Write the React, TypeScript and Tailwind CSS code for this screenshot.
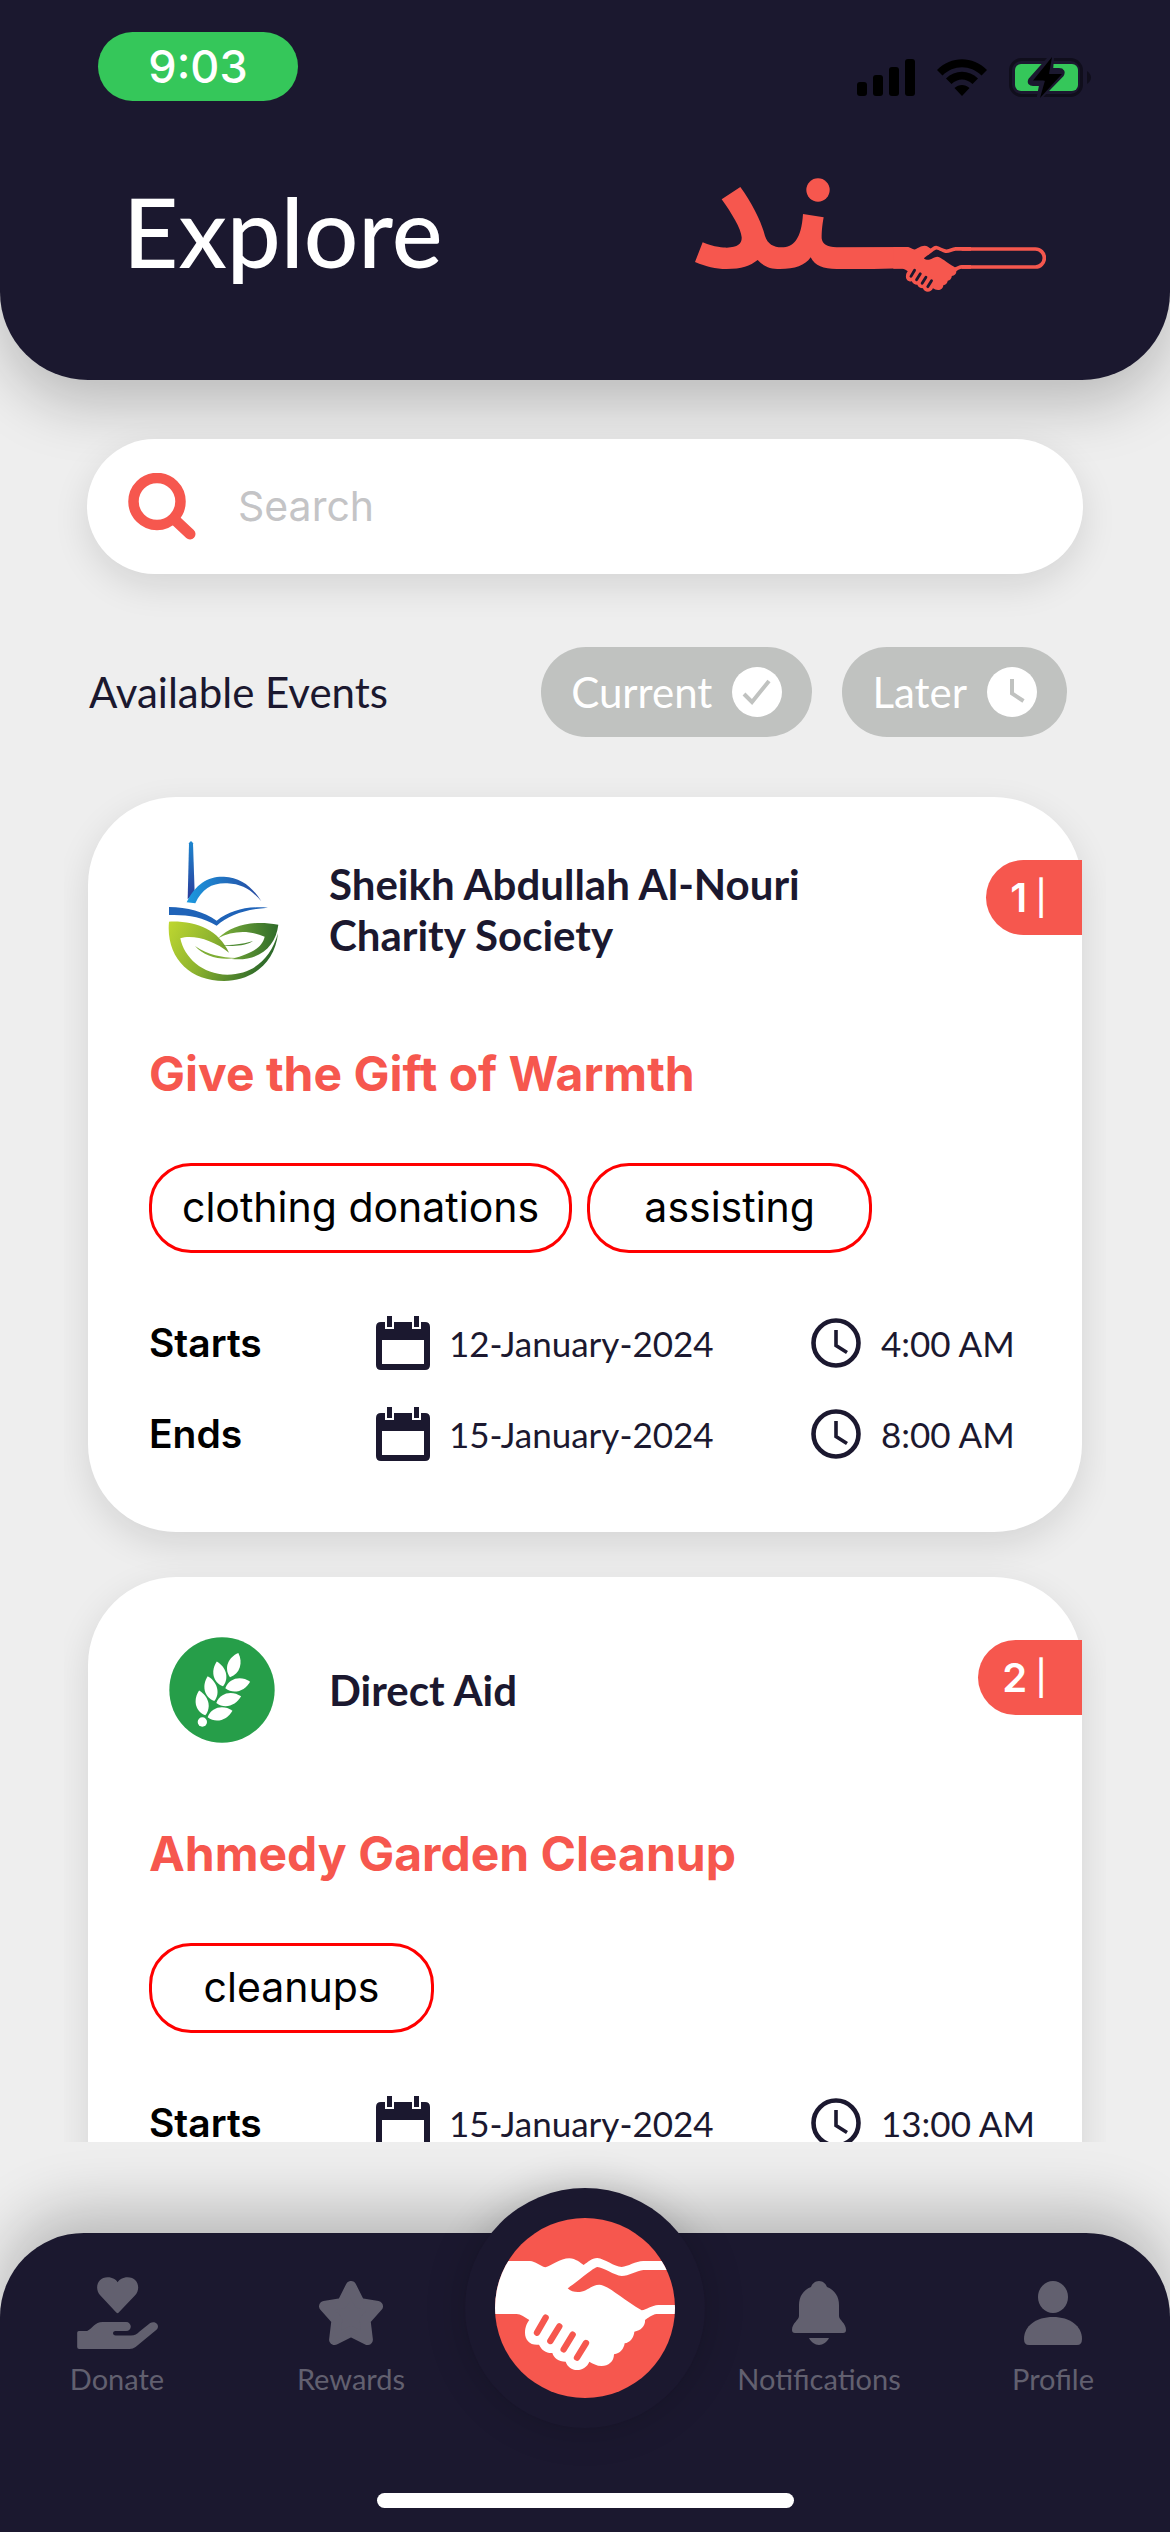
import React from "react";

type EventInfo = {
  id: number;
  org: string;
  logo: React.ReactNode;
  title: string;
  tags: string[];
  starts: { date: string; time: string };
  ends: { date: string; time: string };
};

const HAND =
  "M45 243H150C166 244 180 258 196 262C214 258 240 235 268 235C288 236 300 248 311 255C324 246 334 234 352 234C374 236 402 260 425 261C445 259 466 244 490 243H600V270H490C470 272 446 288 425 288C402 286 370 262 352 261C340 263 300 299 263 325C272 335 286 337 300 336C325 332 336 314 358 314C384 315 426 357 485 391C500 389 514 376 535 375H600V402H530C515 404 504 414 495 420C497 436 484 452 463 455C462 472 450 488 434 490C432 506 420 521 402 523C402 545 385 558 365 558C350 558 338 550 328 545C322 560 308 570 291 570C275 570 262 560 257 545C235 545 222 535 217 519C198 520 185 510 177 494C150 497 135 480 135 458C135 440 142 428 148 420C135 412 122 402 110 402H45Z";
const FINGERS = "M197 413L171 458M238 439L211 483M278 464L251 508M318 489L291 533";

function BrandLogo() {
  return (
    <svg viewBox="105 54 1053 342" className="w-[351px] h-[114px] shrink-0" role="img" aria-label="سند">
      <g fill="#f6574e">
        <path d="M185 118L241 81C278 132 306 190 315 228C323 252 340 262 365 262C400 262 424 238 429 162L491 172C486 200 485 215 485 235C487 252 500 261 530 262L745 261L745 326L728 325L640 327H530C490 327 465 318 452 292C435 317 405 327 360 327C330 327 312 320 293 300C270 318 245 327 200 327C165 327 140 320 105 306L128 247C165 262 190 263 200 263C235 262 246 250 245 232C243 206 215 160 185 118Z" />
        <circle cx="474" cy="90" r="35" />
        <g transform="translate(681 161) scale(0.42 0.411)">
          <path d={HAND} />
          <path d={FINGERS} stroke="#1b182f" strokeWidth="20" strokeLinecap="round" />
        </g>
      </g>
      <path d="M905 267H1126A27 27 0 0 1 1126 321H905" fill="none" stroke="#f6574e" strokeWidth="11" />
    </svg>
  );
}

function NouriLogo() {
  return (
    <svg viewBox="0 0 450 480" className="w-[150px] h-[160px]" aria-hidden="true">
      <defs>
        <linearGradient id="tower" x1="0" y1="0" x2="0" y2="1">
          <stop offset="0" stopColor="#1c86cf" />
          <stop offset="1" stopColor="#2c3c9a" />
        </linearGradient>
        <linearGradient id="dome" x1="0" y1="0" x2="1" y2="0">
          <stop offset="0" stopColor="#1b9ae0" />
          <stop offset="1" stopColor="#27479f" />
        </linearGradient>
        <linearGradient id="bowl" x1="0" y1="0" x2="1" y2="0.3">
          <stop offset="0" stopColor="#bfd730" />
          <stop offset="0.45" stopColor="#8db32f" />
          <stop offset="1" stopColor="#2f6b2a" />
        </linearGradient>
        <linearGradient id="leaf" x1="0" y1="0" x2="1" y2="0">
          <stop offset="0" stopColor="#7fb13a" />
          <stop offset="1" stopColor="#2f6b2a" />
        </linearGradient>
      </defs>
      <path d="M120 40Q126 28 132 40L137 188L116 208Z" fill="url(#tower)" />
      <path d="M113 217C140 160 180 138 225 140C275 142 310 170 337 214C310 182 280 162 235 160C190 158 160 175 139 220Z" fill="url(#dome)" />
      <path d="M60 231C115 232 165 245 203 272C245 240 295 228 357 233C290 238 240 255 203 287C160 260 110 253 60 255Z" fill="#1f63b8" />
      <path d="M60 275C140 272 208 298 240 368C195 330 130 312 94 325C105 382 160 434 235 434C315 433 365 385 387 310C378 398 310 453 225 453C120 453 50 380 60 275Z" fill="url(#bowl)" />
      <path d="M207 325C250 285 310 270 388 284C380 350 330 395 248 387C310 370 340 352 347 320C300 300 250 302 207 325Z" fill="url(#leaf)" />
      <path d="M218 345C260 346 290 340 312 333C290 347 255 351 218 345Z" fill="#4d8a32" />
      <path d="M138 348C180 376 215 382 262 384C215 392 165 380 138 348Z" fill="#7fae35" />
    </svg>
  );
}

const LEAVES = [
  { x: 169, y: 286, r: -14 },
  { x: 196, y: 243, r: -15 },
  { x: 222, y: 199, r: -14 },
  { x: 243, y: 172, r: 19 },
  { x: 229, y: 205, r: 75 },
  { x: 202, y: 249, r: 75 },
  { x: 176, y: 292, r: 75 },
];

function DirectAidLogo() {
  return (
    <svg viewBox="0 -30 450 480" className="w-[150px] h-[160px]" aria-hidden="true">
      <circle cx="219" cy="210" r="158" fill="#269e49" />
      <g fill="#fff">
        {LEAVES.map((l, i) => (
          <path key={i} d="M0 0C-28 -20 -24 -56 0 -77C22 -56 26 -20 0 0Z" transform={`translate(${l.x} ${l.y}) rotate(${l.r})`} />
        ))}
        <circle cx="160" cy="306" r="14" />
      </g>
    </svg>
  );
}

function CalendarIcon() {
  return (
    <svg viewBox="0 0 54 54" className="size-[54px] shrink-0" aria-hidden="true">
      <path fillRule="evenodd" fill="#1b182f" d="M5 6H49Q54 6 54 11V49Q54 54 49 54H5Q0 54 0 49V11Q0 6 5 6ZM6 24V48H48V24Z" />
      <path d="M9 0H18V13H9ZM36 0H45V13H36Z" fill="#fff" />
      <path d="M11 0H16V11H11ZM38 0H43V11H38Z" fill="#1b182f" />
    </svg>
  );
}

function ClockIcon() {
  return (
    <svg viewBox="0 0 50 50" className="size-[50px] shrink-0" fill="none" stroke="#1b182f" aria-hidden="true">
      <circle cx="25" cy="25" r="22.5" strokeWidth="4.6" />
      <path d="M25 12V27.500L36 34.500" strokeWidth="3.600" />
    </svg>
  );
}

function When({ label, date, time }: { label: string; date: string; time: string }) {
  return (
    <div className="flex items-center h-[54px]">
      <dt className="w-[227px] shrink-0 text-[39px] font-semibold text-black">{label}</dt>
      <dd className="flex flex-1 items-center font-['Lato',sans-serif] text-[35px] text-[#1b182f] whitespace-nowrap">
        <span className="flex items-center gap-[19px] w-[435px]">
          <CalendarIcon />
          {date}
        </span>
        <span className="flex items-center gap-5">
          <ClockIcon />
          {time}
        </span>
      </dd>
    </div>
  );
}

function EventCard({ event }: { event: EventInfo }) {
  return (
    <article className="relative rounded-[88px] bg-white px-[61px] pt-[33px] pb-[71px] shadow-[0_12px_36px_rgba(0,0,0,0.11)]">
      <span className="absolute right-0 top-[63px] flex h-[75px] items-center gap-2 rounded-l-full bg-[#f6574e] pl-6 pr-[35px] text-[40px] font-semibold text-white">
        {event.id} <span className="text-[34px] font-medium">|</span>
      </span>
      <div className="flex items-center gap-[30px]">
        {event.logo}
        <h2 className="w-[520px] font-['Lato',sans-serif] text-[42px] leading-[51px] font-bold text-[#1b182f]">{event.org}</h2>
      </div>
      <h3 className="mt-[54px] text-[48px] leading-[60px] font-bold text-[#f6574e]">{event.title}</h3>
      <ul className="mt-[59px] flex gap-[15px]">
        {event.tags.map((t) => (
          <li key={t} className="flex h-[90px] min-w-[285px] items-center justify-center rounded-[42px] border-[3px] border-[#ff0000] px-[30px] text-[41px] text-black">
            {t}
          </li>
        ))}
      </ul>
      <dl className="mt-[63px] flex flex-col gap-[37px]">
        <When label="Starts" {...event.starts} />
        <When label="Ends" {...event.ends} />
      </dl>
    </article>
  );
}

const EVENTS: EventInfo[] = [
  {
    id: 1,
    org: "Sheikh Abdullah Al-Nouri Charity Society",
    logo: <NouriLogo />,
    title: "Give the Gift of Warmth",
    tags: ["clothing donations", "assisting"],
    starts: { date: "12-January-2024", time: "4:00 AM" },
    ends: { date: "15-January-2024", time: "8:00 AM" },
  },
  {
    id: 2,
    org: "Direct Aid",
    logo: <DirectAidLogo />,
    title: "Ahmedy Garden Cleanup",
    tags: ["cleanups"],
    starts: { date: "15-January-2024", time: "13:00 AM" },
    ends: { date: "15-January-2024", time: "15:00 PM" },
  },
];

function StatusBar() {
  return (
    <div className="flex justify-between pl-[98px] pr-[79px]">
      <div className="flex h-[69px] w-[200px] items-center justify-center rounded-full bg-[#35c75a] text-[45px] font-medium text-white">
        9:03
      </div>
      <div className="mt-[25px] flex h-[41px] items-center gap-[22px]">
        <svg viewBox="0 0 58 37" className="w-[58px] h-[37px]" aria-label="Signal">
          <rect x="0" y="23" width="10" height="14" rx="3" />
          <rect x="16" y="16" width="10" height="21" rx="3" />
          <rect x="32" y="8" width="10" height="29" rx="3" />
          <rect x="48" y="0" width="10" height="37" rx="3" />
        </svg>
        <svg viewBox="0 0 50 37" className="w-[50px] h-[37px]" aria-label="Wi-Fi">
          <path d="M0 11C14 -3.500 36 -3.500 50 11L44.500 16.500C33.500 5.500 16.500 5.500 5.500 16.500ZM9 19.500C18 10.500 32 10.500 41 19.500L35.500 25C29 19 21 19 14.500 25ZM17.500 29C22 25 28 25 32.500 29L25 37Z" />
        </svg>
        <svg viewBox="0 0 82 41" className="w-[82px] h-[41px]" aria-label="Battery charging">
          <rect x="1.500" y="2.500" width="71" height="36" rx="11" fill="none" stroke="#100e1c" strokeWidth="3" />
          <path d="M78 14Q82 17 82 20.500T78 27Z" fill="#100e1c" />
          <rect x="6" y="7" width="63" height="27" rx="6" fill="#35c75a" />
          <path d="M42 1L22 23.500Q21 26 24 26H33.500L31 39L52 17.500Q54 14 50 14H41Z" stroke="#1b182f" strokeWidth="6" strokeLinejoin="round" />
          <path d="M43 0L24 23.500H36L31 41L53 17H40Z" />
        </svg>
      </div>
    </div>
  );
}

function NavItem({ label, children }: { label: string; children: React.ReactNode }) {
  return (
    <a href="#" className="flex flex-col items-center gap-3 font-['Lato',sans-serif] text-[29px] leading-9 text-[#62606f]">
      <span className="flex h-[72px] items-center">{children}</span>
      {label}
    </a>
  );
}

function BottomNav() {
  return (
    <nav className="relative shrink-0 rounded-t-[84px] bg-[#1b182f] pt-[44px] pb-6 shadow-[0_-24px_60px_rgba(0,0,0,0.22)]">
      <div className="grid h-[216px] grid-cols-5 items-start">
        <NavItem label="Donate">
          <svg viewBox="48 50 243 217" className="w-[81px] h-[72px]" fill="currentColor" aria-hidden="true">
            <path d="M170 159Q167 159 163 154L118 106C98 84 110 51 140 51C155 51 165 58 170 66C175 58 185 51 200 51C230 51 242 84 222 106L176 154Q172 159 170 159Z" />
            <path d="M48 218Q48 213 53 213H78C95 205 100 186 125 186H196A13 13 0 0 1 196 213H162Q156 214 156 219Q156 226 164 226H210C222 226 228 222 236 214L268 189C282 180 300 195 287 209L224 261Q216 267 206 267H54Q48 267 48 261Z" />
          </svg>
        </NavItem>
        <NavItem label="Rewards">
          <svg viewBox="775 64 190 190" className="size-[64px]" fill="currentColor" stroke="currentColor" aria-hidden="true">
            <path d="M870 80L895 130L949 139L912 180L919 238L870 214L821 238L828 180L791 139L845 130Z" strokeWidth="32" strokeLinejoin="round" />
          </svg>
        </NavItem>
        <div />
        <NavItem label="Notifications">
          <svg viewBox="0 0 54 64" className="w-[54px] h-[64px]" fill="currentColor" aria-hidden="true">
            <path d="M27 0C31 0 34 3 35 6C43 9 47 16 47 24V35C47 39 54 42 54 49Q54 52 51 52H3Q0 52 0 49C0 42 7 39 7 35V24C7 16 11 9 19 6C20 3 23 0 27 0ZM17 57H37C35 61 31 64 27 64S19 61 17 57Z" />
          </svg>
        </NavItem>
        <NavItem label="Profile">
          <svg viewBox="0 0 58 64" className="w-[58px] h-[64px]" fill="currentColor" aria-hidden="true">
            <ellipse cx="29" cy="16" rx="15" ry="16" />
            <path d="M0 58C0 45 12 36 29 36S58 45 58 58Q58 64 53 64H5Q0 64 0 58Z" />
          </svg>
        </NavItem>
      </div>
      <button
        type="button"
        aria-label="Volunteer"
        className="absolute left-1/2 -top-[45px] flex size-[240px] -translate-x-1/2 items-center justify-center rounded-full bg-[#1b182f] shadow-[0_0_40px_rgba(0,0,0,0.2)]"
      >
        <svg viewBox="45 114 540 540" className="size-[180px]" aria-hidden="true">
          <defs>
            <clipPath id="disc">
              <circle cx="315" cy="384" r="270" />
            </clipPath>
          </defs>
          <g clipPath="url(#disc)">
            <rect x="45" y="114" width="540" height="540" fill="#f6574e" />
            <path d={HAND} fill="#fff" />
            <path d={FINGERS} stroke="#f6574e" strokeWidth="19" strokeLinecap="round" />
          </g>
        </svg>
      </button>
      <div className="mx-auto h-[15px] w-[417px] rounded-full bg-white" />
    </nav>
  );
}

export default function App() {
  return (
    <div className="flex h-screen flex-col overflow-hidden bg-[#eeeeee] font-['Inter',sans-serif]">
      <header className="relative shrink-0 rounded-b-[88px] bg-[#1b182f] pt-8 pb-[88px] shadow-[0_24px_60px_rgba(0,0,0,0.22)]">
        <StatusBar />
        <div className="mt-[77px] flex items-center justify-between pl-[123px] pr-[124px]">
          <h1 className="pb-2 font-['Lato',sans-serif] text-[96px] leading-[106px] font-medium text-white">Explore</h1>
          <BrandLogo />
        </div>
      </header>

      <main className="flex min-h-0 flex-1 flex-col px-[87px] pt-[59px] pb-[91px]">
        <label className="relative flex h-[135px] shrink-0 items-center gap-[42px] rounded-full bg-white px-[41px] shadow-[0_12px_36px_rgba(0,0,0,0.11)]">
          <svg viewBox="0 0 68 67" className="w-[68px] h-[67px] shrink-0" fill="none" stroke="#f6574e" aria-hidden="true">
            <circle cx="29" cy="28.500" r="23.500" strokeWidth="10.500" />
            <path d="M46 46L62 61" strokeWidth="11" strokeLinecap="round" />
          </svg>
          <input type="text" aria-label="Search" placeholder="Search" className="min-w-0 flex-1 bg-transparent text-[41px] outline-none placeholder:text-[#c4c4c6]" />
        </label>

        <div className="mt-[73px] flex shrink-0 items-center font-['Lato',sans-serif] text-[42px] text-[#1b182f]">
          <h2 className="flex-1 pl-0.5">Available Events</h2>
          <div className="flex gap-[30px] pr-4 text-white">
            <button type="button" className="flex h-[90px] items-center gap-5 rounded-full bg-[#c0c2c0] px-[30px]">
              Current
              <svg viewBox="0 0 50 50" className="size-[50px]" aria-hidden="true">
                <circle cx="25" cy="25" r="25" fill="#fff" />
                <path d="M12 27L20 35L37 14" fill="none" stroke="#c0c2c0" strokeWidth="4" />
              </svg>
            </button>
            <button type="button" className="flex h-[90px] items-center gap-5 rounded-full bg-[#c0c2c0] px-[30px]">
              Later
              <svg viewBox="0 0 50 50" className="size-[50px]" aria-hidden="true">
                <circle cx="25" cy="25" r="25" fill="#fff" />
                <path d="M25 12V26.500L36.500 34" fill="none" stroke="#c0c2c0" strokeWidth="4" />
              </svg>
            </button>
          </div>
        </div>

        <section className="-mx-[23px] flex min-h-0 flex-1 flex-col gap-[45px] overflow-hidden px-6 pt-[60px] [&>*]:shrink-0">
          {EVENTS.map((e) => (
            <EventCard key={e.id} event={e} />
          ))}
        </section>
      </main>

      <BottomNav />
    </div>
  );
}
